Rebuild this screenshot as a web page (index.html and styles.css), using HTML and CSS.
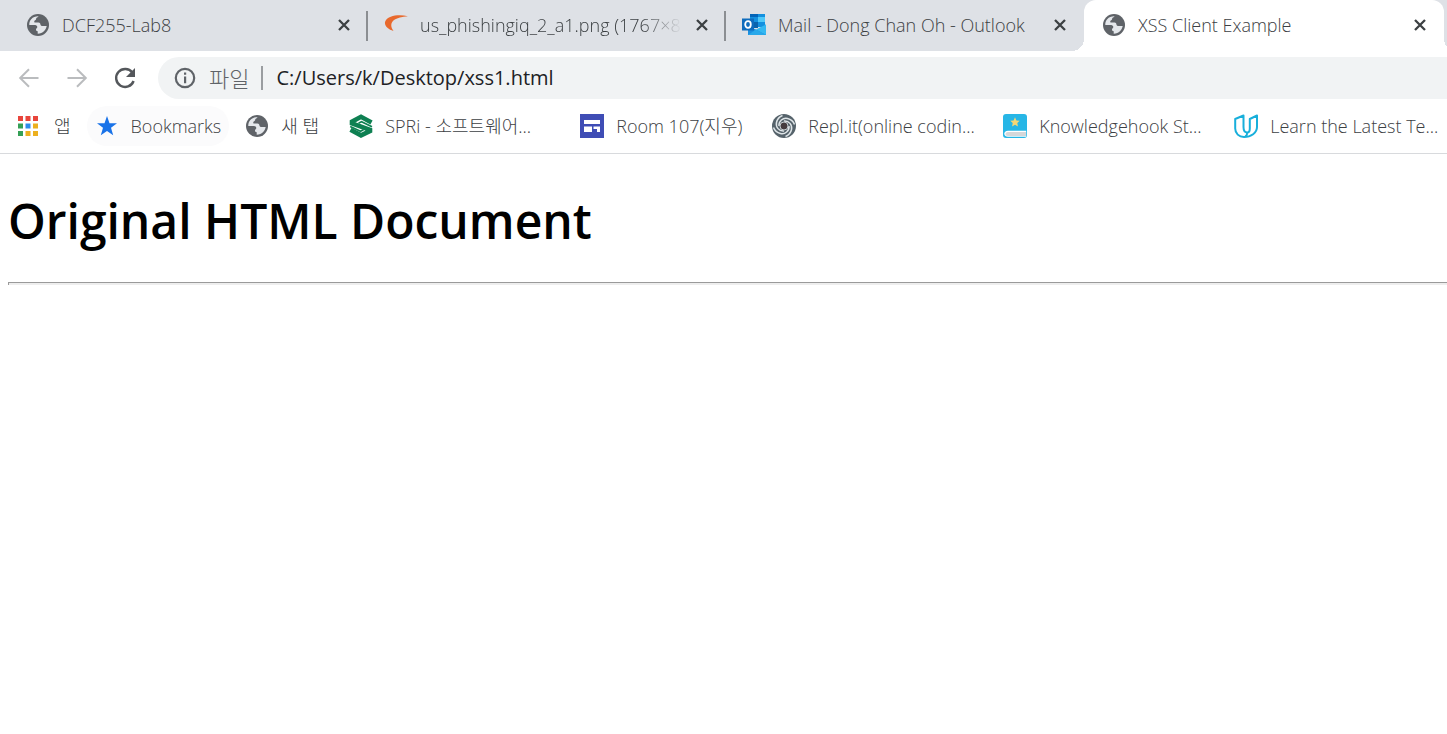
FILE: index.html
```html
<!DOCTYPE html>
<html lang="ko">
<head>
<meta charset="utf-8">
<title>XSS Client Example</title>
<link rel="stylesheet" href="styles.css">
</head>
<body>
<svg width="0" height="0" class="defs" aria-hidden="true">
  <symbol id="globe" viewBox="0 0 24 24"><circle cx="12" cy="12" r="11" fill="#5f6368"/><path d="M12.6 3.2c-.6 1.200-2.600 1.200-2.500 2.800.1 1.400-1.900 1.200-1.900 2.700 0 1.300 2.300.8 4.200.8 1.700 0 2 1.100 2.100 2.300.1 1 1.100 1.200 2.300 1.200h3.900c-.6 3.600-3.700 7.700-9 7.700v-2.500c-1.200 0-1.700-.7-1.700-1.700 0-1.400 1.300-1.300 1.300-2.500 0-1.500-1.500-2-3.200-2H3.300c-.3-4.700 3.200-9 9.300-8.800z" fill="#e4e7eb"/></symbol>
  <symbol id="close" viewBox="0 0 14 14"><path d="M2 2l10 10M12 2L2 12" fill="none" stroke="#3c4043" stroke-width="2.300"/></symbol>
</svg>
<header class="browser">
  <nav class="tabs" aria-label="Tabs">
    <div class="tab">
      <svg class="icon"><use href="#globe"/></svg>
      <span class="tab-title">DCF255-Lab8</span>
      <button class="close" aria-label="Close tab"><svg width="14" height="14"><use href="#close"/></svg></button>
    </div>
    <div class="tab">
      <svg class="icon" viewBox="0 0 24 24"><path d="M24 3.300C15 1 4 2.500 1.300 8.200-.4 12.500 4 16.500 9.500 18 5.500 13 5 4.500 24 3.300z" fill="#e8692d"/></svg>
      <span class="tab-title tab-title-fade">us_phishingiq_2_a1.png (1767×8</span>
      <button class="close" aria-label="Close tab"><svg width="14" height="14"><use href="#close"/></svg></button>
    </div>
    <div class="tab">
      <svg class="icon" viewBox="0 0 24 24"><path d="M8 1h15v13H8z" fill="#1490df"/><path d="M8 1h8v3H8z" fill="#0364b8"/><path d="M16 4h7v5h-7z" fill="#50c8f8"/><path d="M8 9h8v6H8z" fill="#0a63ad"/><path d="M6 13l9 4 9-5.500V22H6z" fill="#1b8fe0"/><path d="M24 11.500V22L14 16.500z" fill="#35b8f1"/><path d="M6 22h18l-10-5.500z" fill="#28a8ea"/><path d="M0 5.500h12v12H0z" fill="#0f6cbd"/><ellipse cx="6" cy="11.500" rx="2.800" ry="3.300" fill="none" stroke="#fff" stroke-width="1.800"/></svg>
      <span class="tab-title">Mail - Dong Chan Oh - Outlook</span>
      <button class="close" aria-label="Close tab"><svg width="14" height="14"><use href="#close"/></svg></button>
    </div>
    <div class="tab tab-active">
      <svg class="icon"><use href="#globe"/></svg>
      <span class="tab-title">XSS Client Example</span>
      <button class="close" aria-label="Close tab"><svg width="14" height="14"><use href="#close"/></svg></button>
    </div>
  </nav>
  <div class="toolbar">
    <button class="tool" aria-label="Back"><svg class="icon" viewBox="0 0 24 24"><path d="M21.500 12H3.500M12 3.200L3.200 12l8.800 8.800" fill="none" stroke="#babcbe" stroke-width="2"/></svg></button>
    <button class="tool" aria-label="Forward"><svg class="icon" viewBox="0 0 24 24"><path d="M2.500 12h18M12 3.200l8.800 8.800-8.800 8.800" fill="none" stroke="#babcbe" stroke-width="2"/></svg></button>
    <button class="tool" aria-label="Reload"><svg class="icon" viewBox="0 0 24 24"><path d="M19.300 6.500A9 9 0 1 0 20.600 15" fill="none" stroke="#54575b" stroke-width="2.400"/><path d="M22 2v9h-9z" fill="#54575b"/></svg></button>
    <div class="address">
      <svg class="icon" viewBox="0 0 24 24"><circle cx="12" cy="12" r="9.200" fill="none" stroke="#5f6368" stroke-width="2.200"/><path d="M11 6.600h2.200v2.200H11zM11 10.400h2.200v6.800H11z" fill="#5f6368"/></svg>
      <label class="scheme" for="url">파일</label>
      <input id="url" class="url" type="text" value="C:/Users/k/Desktop/xss1.html">
    </div>
  </div>
  <nav class="bookmarks" aria-label="Bookmarks">
    <a class="bookmark" href="#"><svg class="icon" viewBox="0 0 24 24"><path d="M0 2h5v5H0zM7.500 2h5v5h-5zM15 2h5v5h-5z" fill="#e8453c"/><path d="M0 9.500h5v5H0zM0 17h5v5H0z" fill="#35a056"/><path d="M7.500 9.500h5v5h-5z" fill="#2d8ceb"/><path d="M15 9.500h5v5h-5zM7.500 17h5v5h-5zM15 17h5v5h-5z" fill="#ecb01f"/></svg>앱</a>
    <a class="bookmark bookmark-hover" href="#"><svg class="icon" viewBox="0 0 24 24"><path d="M12 2l2.500 7.200H22l-6 4.600 2.200 7.500L12 17l-6.200 4.300L8 13.800 2 9.200h7.500z" fill="#1a73e8"/></svg>Bookmarks</a>
    <a class="bookmark bookmark-short" href="#"><svg class="icon"><use href="#globe"/></svg>새 탭</a>
    <a class="bookmark bookmark-wide" href="#"><svg class="icon" viewBox="0 0 24 24"><path d="M22.500 8.500L12 2.800 3 7.600v1.800l18 6.500v1.200l-9 4.300-10.500-5.600" fill="none" stroke="#0e8052" stroke-width="4.600"/><path d="M9.500 9.200l3-1.400 10.500 5M14.500 15.800l-3 1.400L1.200 12.500" fill="none" stroke="#0e8052" stroke-width="1.800"/></svg>SPRi - 소프트웨어...</a>
    <a class="bookmark bookmark-medium" href="#"><svg class="icon" viewBox="0 0 24 24"><path d="M0 0h24v24H0z" fill="#3f4db5"/><path d="M4 6h16v4H4zM4 12.500h8V18H4zM13.500 12.500H20V18h-3v-3h-3.500z" fill="#fff"/></svg>Room 107(지우)</a>
    <a class="bookmark bookmark-wide" href="#"><svg class="icon" viewBox="0 0 24 24"><circle cx="12" cy="12" r="12" fill="#56636b"/><g fill="none" stroke="#dfe5e8" stroke-width="1.500"><path id="arm" d="M7 12C6.500 7 11 3.500 15.500 4.500c3.500.8 6 3.300 7 6"/><use href="#arm" transform="rotate(90 12 12)"/><use href="#arm" transform="rotate(180 12 12)"/><use href="#arm" transform="rotate(270 12 12)"/></g><circle cx="12" cy="12" r="4" fill="#453c3f" stroke="#c5cdd1"/></svg>Repl.it(online codin...</a>
    <a class="bookmark bookmark-wide" href="#"><svg class="icon" viewBox="0 0 24 24"><rect width="24" height="24" rx="3" fill="#27b6e6"/><path d="M23.200 16.800H5c-5 0-5 6 0 6h18.200" fill="#fff"/><path d="M23 18H5c-3.300 0-3.300 4 0 4h18z" fill="#d5d7d9"/><path d="M12 3.300l1.400 3.100 3.300.4-2.400 2.300.6 3.300-2.900-1.700-2.900 1.700.6-3.300-2.400-2.300 3.300-.4z" fill="#f7d774"/></svg>Knowledgehook St...</a>
    <a class="bookmark bookmark-wide" href="#"><svg class="icon" viewBox="0 0 24 24"><path d="M9.500 1.500L1.200 5v9.500C1.200 19.500 5 23 10 23c7 0 13-4 13-10V1.500L15.800 5v9.500c0 2.500-.8 4-2.500 4-2.500 0-3.800-2.500-3.800-5.500zM13.300 18.500c0 2-1 3.500-2.300 4.500" fill="none" stroke="#18afdb" stroke-width="2" stroke-linejoin="round"/></svg>Learn the Latest Te...</a>
  </nav>
</header>
<main class="page">
  <h1 class="heading">Original HTML Document</h1>
  <hr class="rule">
</main>
</body>
</html>
```
FILE: styles.css
```css
* { box-sizing: border-box; }
body {
  margin: 0;
  background: #fff;
  color: #3c4043;
  font-family: "Open Sans", "Noto Sans CJK KR", sans-serif;
  font-size: 18px;
  line-height: 24px;
  overflow-x: hidden;
}
.defs { position: absolute; }
button { border: 0; padding: 0; background: none; }
.icon { width: 24px; height: 24px; flex: none; }
.browser { border-bottom: 1px solid #d8dadd; }
.tabs {
  display: flex;
  padding: 0 3px 0 10px;
  background: #dee1e6;
}
.tab {
  flex: 1 1 0;
  min-width: 0;
  height: 51px;
  display: flex;
  align-items: center;
  gap: 12px;
  padding: 0 16px 2px;
  background: linear-gradient(#8b8e92, #8b8e92) right 11px / 2px 30px no-repeat;
}
.tab:nth-child(3) {
  background: none;
}
.tab-active {
  position: relative;
  padding-left: 18px;
  background: #fff;
  border-radius: 12px 12px 0 0;
}
.tab-active::before,
.tab-active::after {
  content: "";
  position: absolute;
  bottom: 0;
  width: 12px;
  height: 12px;
}
.tab-active::before { right: 100%; background: radial-gradient(circle at 0 0, transparent 12px, #fff 12px); }
.tab-active::after { left: 100%; background: radial-gradient(circle at 100% 0, transparent 12px, #fff 12px); }
.tab-title {
  flex: 1;
  min-width: 0;
  white-space: nowrap;
  font-weight: 300;
}
.tab-title-fade { mask-image: linear-gradient(to right, #000 calc(100% - 40px), transparent); }
.close { width: 16px; height: 24px; display: flex; align-items: center; justify-content: center; }
.toolbar {
  display: flex;
  align-items: center;
  padding: 6px 0 0 5px;
  height: 48px;
}
.tool { width: 48px; height: 40px; display: flex; align-items: center; justify-content: center; }
.address {
  flex: 1;
  height: 42px;
  margin-left: 9px;
  padding-left: 15px;
  display: flex;
  align-items: center;
  background: #f1f3f4;
  border-radius: 21px 0 0 21px;
}
.scheme {
  margin-left: 12px;
  padding-right: 12px;
  border-right: 2px solid #9a9da0;
  font-size: 22px;
  font-weight: 300;
  color: #5f6368;
}
.url {
  flex: 1;
  min-width: 0;
  padding: 0 0 0 13px;
  border: 0;
  background: none;
  color: #202124;
  font: 20px/28px "Open Sans", sans-serif;
}
.bookmarks {
  display: flex;
  align-items: center;
  gap: 8px;
  height: 54px;
  padding-left: 10px;
  overflow: hidden;
}
.bookmark {
  flex: none;
  display: flex;
  align-items: center;
  gap: 12px;
  height: 40px;
  padding: 0 8px;
  color: #3c4043;
  font-weight: 300;
  text-decoration: none;
  white-space: nowrap;
}
.bookmark-hover { background: #fbfbfc; border-radius: 20px; }
.bookmark-short { min-width: 96px; }
.bookmark-medium { min-width: 184px; }
.bookmark-wide { min-width: 223px; }
.page { padding: 35px 0 0 8px; }
.heading {
  margin: 0;
  color: #000;
  font-size: 48px;
  line-height: 64px;
  font-weight: 600;
}
.rule {
  height: 3px;
  margin: 29px 0 0;
  border: 0;
  border-top: 1px solid #9a9a9a;
  border-left: 1px solid #9a9a9a;
  background: #eee;
}
```
